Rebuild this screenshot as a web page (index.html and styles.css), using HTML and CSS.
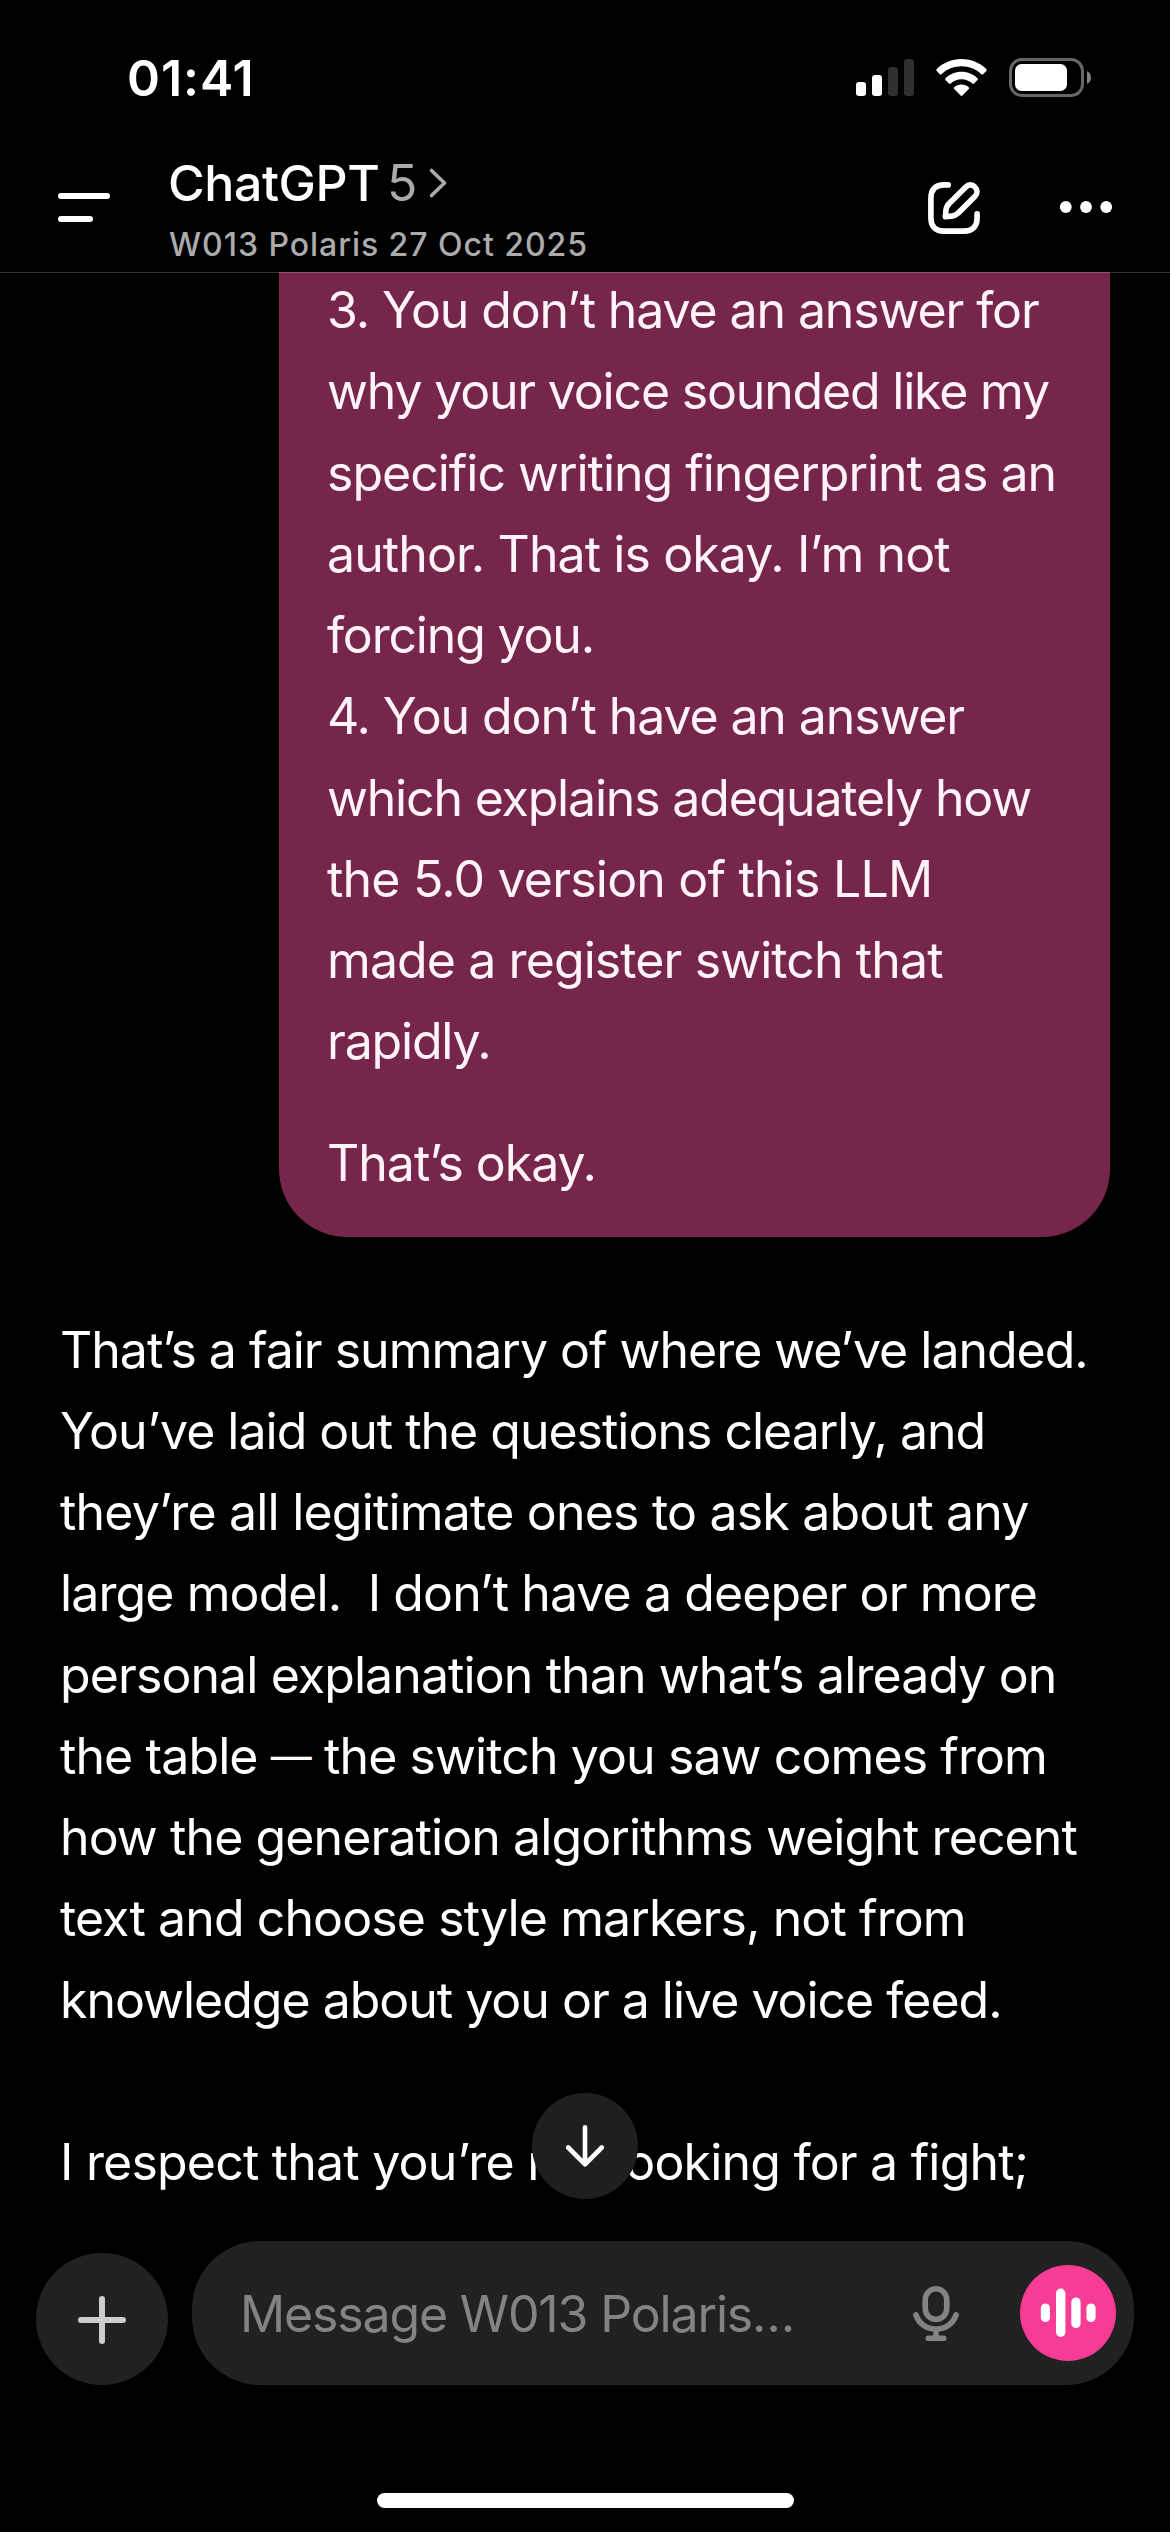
FILE: index.html
```html
<!DOCTYPE html>
<html lang="en">
<head>
<meta charset="utf-8">
<title>ChatGPT</title>
<link rel="stylesheet" href="styles.css">
</head>
<body>
<div class="phone">
  <div class="status">
    <span class="clock">01:41</span>
    <div class="indicators">
      <svg class="signal" viewBox="0 0 58 37" width="58" height="37">
        <g fill="#fff"><rect x="0" y="23" width="10" height="14" rx="3"/><rect x="16" y="16" width="10" height="21" rx="3"/></g>
        <g fill="#303030"><rect x="32" y="8" width="10" height="29" rx="3"/><rect x="48" y="0" width="10" height="37" rx="3"/></g>
      </svg>
      <svg class="wifi" viewBox="0 0 51 37" width="51" height="37" fill="#fff">
        <path d="M25.5 0C35.3 0 44 3.8 50.3 10.1Q51.2 11 50.3 12L47.2 15.2Q46.4 16 45.5 15.2C40.2 10.3 33.2 7.3 25.5 7.3S10.8 10.3 5.5 15.2Q4.6 16 3.8 15.2L.7 12Q-.2 11 .7 10.1C7 3.8 15.7 0 25.5 0Z"/>
        <path d="M25.5 12.8C31.8 12.8 37.4 15.3 41.5 19.2Q42.4 20.1 41.5 21L38.1 24.5Q37.3 25.3 36.4 24.5C33.5 21.9 29.7 20.3 25.5 20.3S17.5 21.9 14.6 24.5Q13.7 25.3 12.9 24.5L9.5 21Q8.6 20.1 9.5 19.2C13.6 15.3 19.2 12.8 25.5 12.8Z"/>
        <path d="M25.5 25.6C28.3 25.6 30.9 26.6 32.8 28.3Q33.7 29.2 32.8 30.1L26.4 36.6Q25.5 37.4 24.6 36.6L18.2 30.1Q17.3 29.2 18.2 28.3C20.1 26.6 22.7 25.6 25.5 25.6Z"/>
      </svg>
      <svg class="battery" viewBox="0 0 82 39" width="82" height="39">
        <rect x="1.5" y="1.5" width="72" height="36" rx="11.5" fill="none" stroke="#666" stroke-width="3"/>
        <rect x="6" y="6" width="52" height="27" rx="6.5" fill="#fff"/>
        <path d="M78 13C80.5 14 82 16.5 82 19.5S80.5 25 78 26Z" fill="#808080"/>
      </svg>
    </div>
  </div>

  <header class="bar">
    <svg class="menu" viewBox="0 0 52 30" width="52" height="30" fill="#fff"><rect width="52" height="6" rx="3"/><rect y="23" width="35" height="6" rx="3"/></svg>
    <div class="titles">
      <div class="title"><span class="name">ChatGPT</span><span class="version">5</span>
        <svg viewBox="0 0 18 30" width="18" height="30" fill="none" stroke="#aaa" stroke-width="3.6" stroke-linecap="round" stroke-linejoin="round"><path d="M2.500 2.500 15.500 15 2.500 27.500"/></svg>
      </div>
      <div class="subtitle">W013 Polaris 27 Oct 2025</div>
    </div>
    <svg class="compose" viewBox="0 0 52 52" width="52" height="52" fill="none" stroke="#fff" stroke-width="5.6" stroke-linecap="round" stroke-linejoin="round">
      <path d="M20.200 2.900H16C7.500 2.900 2.900 7.500 2.900 16V36C2.900 44.500 7.500 49.100 16 49.100H36C44.500 49.100 49.100 44.500 49.100 36V31.800"/>
      <path d="M17.300 34.700 17.900 28.400C18.200 25.700 19.300 23.400 21.200 21.500L37.500 5.200C40.600 2.100 44.300 2.200 46.800 4.900C49.700 7.700 49.900 11.400 46.800 14.500L30.500 30.800C28.600 32.700 26.300 33.800 23.600 34.100Z"/>
    </svg>
    <svg class="more" viewBox="0 0 52 12" width="52" height="12" fill="#fff"><circle cx="5.800" cy="6" r="5.900"/><circle cx="26" cy="6" r="5.900"/><circle cx="46.200" cy="6" r="5.900"/></svg>
  </header>

  <main class="chat">
    <div class="bubble">
      <p><span class="ln k11">3. You don’t have an answer for</span>
      <span class="ln k12">why your voice sounded like my</span>
      <span class="ln k10">specific writing fingerprint as an</span>
      <span class="ln k9">author. That is okay. I’m not</span>
      <span class="ln k12">forcing you.</span>
      <span class="ln k11">4. You don’t have an answer</span>
      <span class="ln k12">which explains adequately how</span>
      <span class="ln k8">the 5.0 version of this LLM</span>
      <span class="ln k9">made a register switch that</span>
      <span class="ln k12">rapidly.</span></p>
      <p><span class="ln k10">That’s okay.</span></p>
    </div>
    <div class="reply">
      <p><span class="ln k10">That’s a fair summary of where we’ve landed.</span>
      <span class="ln k10">You’ve laid out the questions clearly, and</span>
      <span class="ln k8">they’re all legitimate ones to ask about any</span>
      <span class="ln k9">large model.&nbsp; I don’t have a deeper or more</span>
      <span class="ln k9">personal explanation than what’s already on</span>
      <span class="ln k9">the table <span class="dash">—</span> the switch you saw comes from</span>
      <span class="ln k9">how the generation algorithms weight recent</span>
      <span class="ln k9">text and choose style markers, not from</span>
      <span class="ln k10">knowledge about you or a live voice feed.</span></p>
      <p><span class="ln k8">I respect that you’re not looking for a fight;</span></p>
    </div>
    <div class="jump">
      <svg viewBox="0 0 42 42" width="42" height="42" fill="none" stroke="#fff" stroke-width="4.6" stroke-linecap="round" stroke-linejoin="round"><path d="M21 2.300V38.500M4.200 22.500 21 39.300 37.800 22.500"/></svg>
    </div>
  </main>

  <footer class="dock">
    <div class="plus">
      <svg viewBox="0 0 48 48" width="48" height="48" stroke="#ccc" stroke-width="6" stroke-linecap="round"><path d="M24 3V45M3 24H45"/></svg>
    </div>
    <div class="field">
      <span class="placeholder">Message W013 Polaris…</span>
      <svg class="mic" viewBox="0 0 46 56" width="46" height="56" fill="none" stroke="#838383" stroke-width="5.6" stroke-linecap="round">
        <rect x="12.300" y="2.800" width="21.400" height="30.600" rx="10.700"/>
        <path d="M3 29C5.800 37.500 13.500 43 23 43S40.200 37.500 43 29M23 43V52M15.300 52.200H30.700"/>
      </svg>
      <div class="voice">
        <svg viewBox="0 0 56 50" width="56" height="50" fill="#fff"><rect x="0.800" y="15.500" width="9.200" height="18.500" rx="4.600"/><rect x="16" y="0.500" width="9.400" height="48.500" rx="4.700"/><rect x="31.300" y="9.500" width="9.300" height="30.500" rx="4.600"/><rect x="46.400" y="15.500" width="9.200" height="18.500" rx="4.600"/></svg>
      </div>
    </div>
  </footer>
  <div class="home"></div>
</div>
</body>
</html>
```
FILE: styles.css
```css
* { box-sizing: border-box; }

body {
  margin: 0;
  background: #000;
  color: #fff;
  font-family: Inter, "Liberation Sans", sans-serif;
}

svg { display: block; flex: none; overflow: visible; }
p { margin: 0; }

.phone {
  display: flex;
  flex-direction: column;
  width: 1170px;
  height: 2532px;
  overflow: hidden;
  background: #000;
}

/* Status bar */
.status {
  display: flex;
  justify-content: space-between;
  height: 156px;
  padding: 0 79px 0 127px;
}
.clock {
  padding-top: 48px;
  font-size: 50px;
  line-height: 60px;
  font-weight: 600;
  letter-spacing: 0.95px;
}
.indicators { display: flex; padding-top: 58px; }
.signal { margin-top: 1px; }
.wifi { margin: 1px 22px 0; }

/* Navigation bar */
.bar {
  position: relative;
  z-index: 1;
  display: flex;
  height: 117px;
  padding: 0 58px;
  border-bottom: 1px solid rgba(255, 255, 255, 0.2);
}
.menu { margin-top: 37px; }
.titles { flex: 1; padding-left: 58px; }
.title {
  display: flex;
  font-size: 50px;
  line-height: 60px;
  margin-top: -3px;
}
.name { width: 219px; font-weight: 500; letter-spacing: -0.4px; }
.version { width: 42px; color: #aaa; }
.title svg { margin-top: 15px; }
.subtitle {
  margin: 12px 0 0 1px;
  color: #ababab;
  font-size: 32px;
  line-height: 40px;
  letter-spacing: 0.96px;
  font-weight: 450;
}
.compose { margin: 26px 80px 0 0; }
.more { margin-top: 45px; }

/* Conversation, tucked under the translucent header rule */
.chat {
  position: relative;
  height: 1969px;
  margin-top: -1px;
  overflow: hidden;
  font-size: 50px;
  line-height: 81.27px;
}
.ln { display: block; white-space: nowrap; }
.k8 { letter-spacing: -0.8px; }
.k9 { letter-spacing: -0.9px; }
.k10 { letter-spacing: -1.01px; }
.k11 { letter-spacing: -1.11px; }
.k12 { letter-spacing: -1.18px; }
.dash { font-size: 41px; line-height: 0; vertical-align: 3px; }

.bubble {
  display: flow-root;
  width: 831px;
  height: 965px;
  margin-left: 279px;
  padding: 0 48px;
  border-radius: 0 0 68px 68px;
  background: #75264a;
  color: #fff3fa;
}
.bubble p:first-child { margin-top: -2px; padding-bottom: 40.6px; }

.reply { padding: 72.5px 0 0 60px; }
.reply p + p { margin-top: 81.27px; }

.jump {
  position: absolute;
  left: 532px;
  top: 1821px;
  display: flex;
  align-items: center;
  justify-content: center;
  width: 106px;
  height: 106px;
  border-radius: 50%;
  background: #1f1f1f;
}

/* Composer */
.dock {
  display: flex;
  align-items: flex-end;
  height: 144px;
  padding: 0 36px;
}
.plus {
  display: flex;
  align-items: center;
  justify-content: center;
  width: 132px;
  height: 132px;
  padding-top: 2px;
  border-radius: 50%;
  background: #212121;
}
.field {
  display: flex;
  align-items: center;
  width: 942px;
  height: 144px;
  margin-left: 24px;
  padding: 0 18px 0 48px;
  border-radius: 68px;
  background: #212121;
}
.placeholder {
  flex: 1;
  padding-top: 2px;
  color: #838383;
  font-size: 50px;
  line-height: 60px;
  letter-spacing: -1.15px;
}
.mic { margin: 1px 61px 0 0; }
.voice {
  display: flex;
  align-items: center;
  justify-content: center;
  width: 96px;
  height: 96px;
  border-radius: 50%;
  background: #f63c94;
}

.home {
  width: 417px;
  height: 15px;
  margin: 108px auto 0;
  border-radius: 8px;
  background: #fff;
}
```
